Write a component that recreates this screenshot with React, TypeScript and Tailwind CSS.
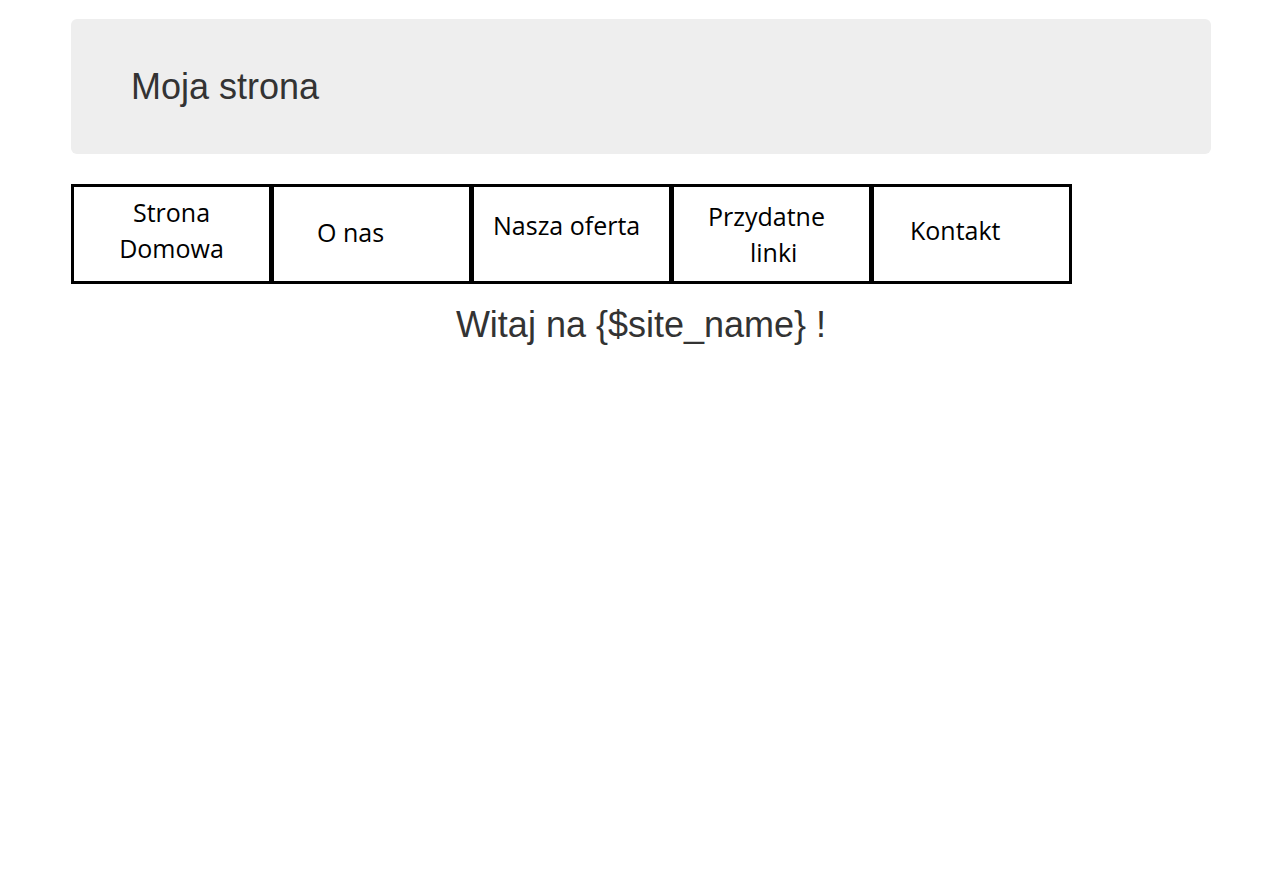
const navItems = [
  { lines: ['Strona', 'Domowa'], cls: 'items-center pt-[7px] pl-0' },
  { lines: ['O nas'], cls: 'items-start pt-[27px] pl-[43px]' },
  { lines: ['Nasza oferta'], cls: 'items-start pt-[20px] pl-[19px]' },
  { lines: ['Przydatne', 'linki'], cls: 'items-start pt-[11px] pl-[34px]' },
  { lines: ['Kontakt'], cls: 'items-start pt-[25px] pl-[36px]' },
];

const Nav = () => (
  <ul className="flex flex-row">
    {navItems.map((item, i) => (
      <li
        key={i}
        className={`flex flex-col w-[201px] h-[100px] border-[3px] border-black text-black text-[25px] leading-[36px] ${i > 0 ? '-ml-px' : ''} ${item.cls}`}
        style={{ fontFamily: '"Open Sans", "Noto Sans", sans-serif' }}
      >
        {item.lines.map((line, j) => (
          <span key={j} className={j === 1 && i === 3 ? 'pl-[42px]' : ''}>
            {line}
          </span>
        ))}
      </li>
    ))}
  </ul>
);

const App = () => {
  return (
    <div className="bg-white min-h-[886px] pt-[19px]" style={{ fontFamily: '"Liberation Sans", Arial, sans-serif' }}>
      <div className="w-[1140px] ml-[71px]">
        <div className="flex items-center h-[135px] bg-[#eeeeee] rounded-[6px] pl-[60px] mb-[30px]">
          <h1 className="text-[36px] leading-[40px] text-[#333333]">Moja strona</h1>
        </div>
        <Nav />
        <h1 className="mt-[21px] text-center text-[36px] leading-[40px] text-[#333333]">Witaj na {'{$site_name}'} !</h1>
      </div>
    </div>
  );
};

export default App;
